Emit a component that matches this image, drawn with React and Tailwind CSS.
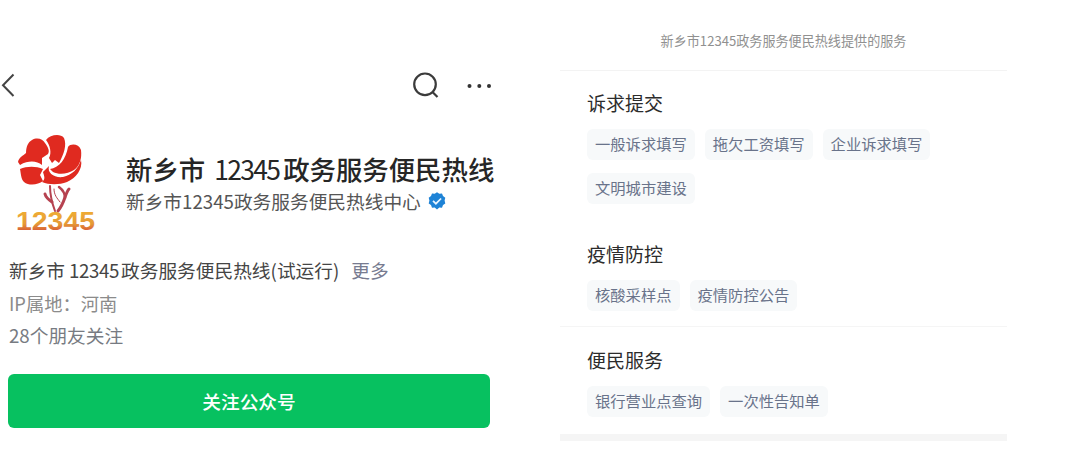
import React from 'react';

const sections = [
  {
    title: '诉求提交',
    className: 'h-[157px] pt-[17px]',
    items: ['一般诉求填写', '拖欠工资填写', '企业诉求填写', '文明城市建设'],
  },
  {
    title: '疫情防控',
    className: 'h-[99px] pt-[11px] border-b border-[#f5f5f5]',
    items: ['核酸采样点', '疫情防控公告'],
  },
  {
    title: '便民服务',
    className: 'h-[107px] pt-[18px]',
    items: ['银行营业点查询', '一次性告知单'],
  },
];

const HotlineLogo = () => (
  <svg className="w-[86px] h-[110px] shrink-0" viewBox="0 0 86 110">
    <g fill="#e02a20">
      <path d="M4 30C5 25 9 24 12 21C12 15 14 10 18 8C23 5 29 7 31 11C34 15 36 19 34 22L28 26L28 33C23 29 15 28 6 33Z" />
      <path d="M32 8C36 3 46 1 50 6C53 13 50 22 45 31L41 28L38 31L35 26C38 21 36 13 32 8Z" />
      <path d="M54 15C57 11 65 12 67 18C68 26 66 34 60 38C54 42 45 43 39 40L36 37C45 36 52 27 54 15Z" />
      <path d="M6 37C13 34 22 34 29 37L26 43L29 49C24 53 15 54 10 50C7 47 7 42 6 37Z" />
      <path d="M29 40L35 34C33 41 40 46 49 45C58 43 64 37 67 28C69 37 62 46 53 50C45 53 35 53 28 50C32 47 30 44 29 40Z" />
    </g>
    <g fill="none" stroke="#b64250" strokeLinecap="round">
      <path d="M36 54C36 64 38 71 41 79" strokeWidth="2" />
      <path d="M31 62C32 66 35 68 38 70" strokeWidth="3" />
      <path d="M55 57C51 61 51 71 44 79" strokeWidth="3" />
      <path d="M45 55C49 58 51 62 51 66" strokeWidth="2.5" />
      <path d="M40 57C40 63 43 66 46 70" strokeWidth="1" />
    </g>
    <defs>
      <linearGradient id="digits" x1="0" y1="0" x2="0" y2="1">
        <stop offset="0.25" stopColor="#eda934" />
        <stop offset="0.6" stopColor="#e59a38" />
        <stop offset="0.85" stopColor="#d85b35" />
      </linearGradient>
    </defs>
    <text x="2" y="98" fontSize="25" fontWeight="700" fontFamily="Liberation Sans, sans-serif" textLength="79" lengthAdjust="spacingAndGlyphs" fill="url(#digits)">
      12345
    </text>
  </svg>
);

const VerifiedBadge = () => (
  <svg className="w-[18px] h-[18px] ml-[7px]" viewBox="0 0 18 18">
    <path
      d="M9 .3l2.300 1.400 2.700-.1 1 2.500 2.300 1.700-.7 2.800.7 2.800-2.300 1.700-1 2.600-2.700-.1L9 17.400l-2.300-1.800-2.700.1-1-2.600-2.300-1.700.7-2.800-.7-2.800L3 4.100l1-2.500 2.700.1z"
      fill="#1e83d6"
    />
    <path d="M5 8.800l2.900 2.900 5.200-5.200" fill="none" stroke="#e8f4ff" strokeWidth="1.700" />
  </svg>
);

const AccountProfile = () => (
  <div className="w-[516px] h-[453px] shrink-0 pt-[60px]">
    <div className="flex items-center h-[50px]">
      <svg className="w-[18px] h-[26px]" viewBox="0 0 18 26" fill="none" stroke="#444" strokeWidth="2">
        <path d="M13.500 2.500L3 13.200l10.500 10.800" />
      </svg>
      <svg className="w-[28px] h-[28px] ml-[394px]" viewBox="0 0 28 28" fill="none" stroke="#3b3b3b" strokeWidth="2.200">
        <circle cx="13" cy="13.300" r="10.800" />
        <path d="M20 20.500l5.500 5.500" />
      </svg>
      <svg className="w-[28px] h-[6px] ml-[26px]" viewBox="0 0 28 6" fill="#333">
        <circle cx="3.500" cy="4" r="2" />
        <circle cx="13.300" cy="4" r="2" />
        <circle cx="23" cy="4" r="2" />
      </svg>
    </div>

    <div className="flex h-[145px] pt-[22px] pl-[14px]">
      <HotlineLogo />
      <div className="pl-[26px] pt-[17px] whitespace-nowrap">
        <h1 className="flex text-[26.4px] leading-[40px] font-medium text-[#262626]">
          <span>新乡市</span>
          <span className="w-[78px] pl-[9px] tracking-[-1.6px] font-normal">12345</span>
          <span>政务服务便民热线</span>
        </h1>
        <p className="flex items-center text-[18.7px] leading-[24px] text-[#555]">
          新乡市12345政务服务便民热线中心
          <VerifiedBadge />
        </p>
      </div>
    </div>

    <div className="pl-[9px] whitespace-nowrap text-[18.7px]">
      <p className="flex leading-[30px] text-[#454545]">
        <span>新乡市</span>
        <span className="w-[56px] pl-[4px] tracking-[-0.4px]">12345</span>
        <span>政务服务便民热线(试运行)</span>
        <span className="ml-[12px] text-[#777b90]">更多</span>
      </p>
      <p className="text-[18.3px] leading-[34px] pt-px text-[#8b8b8b]">IP属地：河南</p>
      <p className="leading-[30px] text-[#777b82]">28个朋友关注</p>
    </div>

    <button className="block w-[482px] h-[54px] ml-[8px] mt-[24px] rounded-md bg-[#07c160] text-white text-[18.7px] font-medium">
      关注公众号
    </button>
  </div>
);

const ServiceList = () => (
  <div className="w-[447px] shrink-0 ml-[44px]">
    <p className="h-[71px] pt-[31px] text-center text-[13.1px] leading-[20px] text-[#909090] border-b border-[#f3f3f3]">
      新乡市12345政务服务便民热线提供的服务
    </p>
    {sections.map((section) => (
      <section key={section.title} className={`pl-[27px] ${section.className}`}>
        <h2 className="text-[19px] leading-[30px] text-[#2c2c2c]">{section.title}</h2>
        <div className="flex flex-wrap gap-x-[10px] gap-y-[13px] mt-[11px] text-[15.3px] text-[#69738a]">
          {section.items.map((item) => (
            <span key={item} className="h-[31px] px-2 leading-[29px] rounded-md bg-[#f7f9fa]">
              {item}
            </span>
          ))}
        </div>
      </section>
    ))}
    <div className="h-[7px] bg-[#f5f5f5]" />
  </div>
);

const App = () => {
  return (
    <div
      lang="zh-CN"
      className="flex w-[1065px] h-[453px] overflow-hidden bg-white font-['Noto_Sans_CJK_SC',sans-serif]"
    >
      <AccountProfile />
      <ServiceList />
    </div>
  );
};

export default App;
